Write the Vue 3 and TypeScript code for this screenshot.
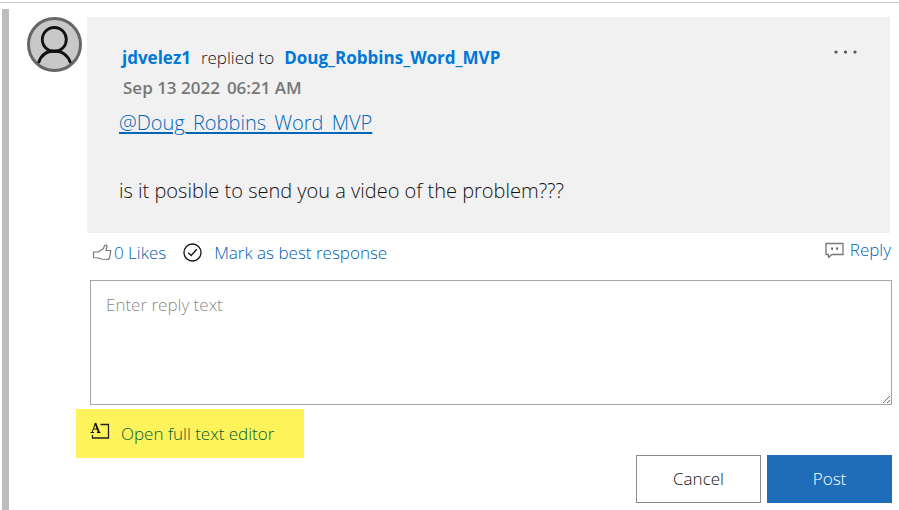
<script setup lang="ts">
import { ref } from 'vue'

interface Reply {
  author: string
  recipient: string
  date: string
  time: string
  body: string
}

const reply: Reply = {
  author: 'jdvelez1',
  recipient: 'Doug_Robbins_Word_MVP',
  date: 'Sep 13 2022',
  time: '06:21 AM',
  body: 'is it posible to send you a video of the problem???',
}

const likes = ref(0)
const draft = ref('')
</script>

<template>
  <main class="page">
    <article class="thread">
      <a class="avatar" href="#" aria-label="Author profile">
        <svg viewBox="0 0 55 55" aria-hidden="true">
          <circle cx="27.5" cy="27.5" r="26" fill="#c8c8c8" stroke="#666" stroke-width="3" />
          <circle cx="27.3" cy="22.5" r="12" fill="none" stroke="#111" stroke-width="2.800" />
          <path d="M11.500 46C14 38 20 34 27.300 34S41 38 43.500 46" fill="none" stroke="#111" stroke-width="2.800" />
        </svg>
      </a>

      <div class="content">
        <section class="card">
          <header class="card-head">
            <p class="byline">
              <a class="user" href="#">{{ reply.author }}</a>
              <span>replied to</span>
              <a class="user" href="#">{{ reply.recipient }}</a>
            </p>
            <button class="more" type="button" aria-label="More options">
              <svg viewBox="0 0 24 4" aria-hidden="true">
                <circle cx="2" cy="2" r="1.600" /><circle cx="11.500" cy="2" r="1.600" /><circle cx="21" cy="2" r="1.600" />
              </svg>
            </button>
          </header>
          <p class="stamp"><time>{{ reply.date }}</time><time>{{ reply.time }}</time></p>
          <p class="body"><a class="mention" href="#">@{{ reply.recipient }}</a></p>
          <p class="body message">{{ reply.body }}</p>
        </section>

        <div class="actions">
          <button class="action like" type="button" @click="likes++">
            <svg class="thumb" viewBox="0 0 20 18" aria-hidden="true">
              <path d="M1.500 8H6L11.500 4.500L12.500 1.500L14.500 1L15 2.500L14 6.500H18.800L17.500 14L16 15.500L9 15L6.500 14L1.500 13.500Z" fill="#fff" stroke="#777" stroke-width="1.200" stroke-linejoin="round" />
            </svg>
            <span>{{ likes }} Likes</span>
          </button>
          <button class="action best" type="button">
            <svg class="check" viewBox="0 0 19 19" aria-hidden="true">
              <circle cx="9.500" cy="9.500" r="8.500" fill="none" stroke="#111" stroke-width="1.300" />
              <path d="M5.200 9.800L8.200 12.500L13.800 6.200" fill="none" stroke="#111" stroke-width="1.300" />
            </svg>
            <span>Mark as best response</span>
          </button>
          <button class="action respond" type="button">
            <svg class="bubble" viewBox="0 0 19 17" aria-hidden="true">
              <path d="M1 2.500H18V13.500H7L3.500 16.500V13.500H1Z" fill="#fff" stroke="#777" stroke-width="1.300" />
              <path d="M6 6.500H8V8.500L7 9.500V8.500H6ZM11 6.500H13V8.500L12 9.500V8.500H11Z" fill="#666" />
            </svg>
            <span>Reply</span>
          </button>
        </div>

        <form class="editor" @submit.prevent>
          <textarea v-model="draft" aria-label="Reply text" placeholder="Enter reply text"></textarea>
          <button class="full-editor" type="button">
            <svg viewBox="0 0 20 18" aria-hidden="true">
              <path d="M0.500 10.500H4M7 10.500H10.500" fill="none" stroke="#111" stroke-width="1.200" />
              <path d="M2 10.500L5.500 1M3.500 7H8" fill="none" stroke="#111" stroke-width="1" />
              <path d="M5.300 1L9 10.500" fill="none" stroke="#111" stroke-width="1.900" />
              <path d="M10.500 2.500H18.500V16H2.500V13" fill="none" stroke="#222" stroke-width="1.300" />
            </svg>
            <span>Open full text editor</span>
          </button>
          <div class="buttons">
            <button class="btn cancel" type="button" @click="draft = ''">Cancel</button>
            <button class="btn post" type="submit">Post</button>
          </div>
        </form>
      </div>
    </article>
  </main>
</template>

<style>
body {
  background: #fff;
}
</style>

<style scoped>
.page {
  box-sizing: border-box;
  display: flex;
  flex-direction: column;
  min-height: 100vh;
  padding-top: 2px;
  font-family: "Open Sans", "Noto Sans", sans-serif;
  font-size: 17px;
  font-weight: 300;
  line-height: 24px;
  color: #111;
}

.page::before {
  content: "";
  height: 1px;
  margin-bottom: 6px;
  background: #c6c6c6;
}

.thread {
  flex: 1;
  display: flex;
  gap: 5px;
  margin-left: 2px;
  padding: 8px 7px 0 18px;
  border-left: 7px solid #bdbdbd;
}

.avatar {
  flex: none;
  width: 55px;
  height: 55px;
}

svg {
  display: block;
}

.content {
  flex: 1;
  min-width: 0;
}

p {
  margin: 0;
}

button {
  padding: 0;
  border: 0;
  background: none;
  font: inherit;
  cursor: pointer;
}

.card {
  box-sizing: border-box;
  min-height: 216px;
  margin-right: 2px;
  padding: 28px 32px 24px;
  background: #f1f1f1;
}

.card-head {
  display: flex;
  justify-content: space-between;
  padding-left: 3px;
}

.byline {
  display: flex;
  gap: 10px;
  padding-top: 1px;
}

.user {
  color: #0078d7;
  font-weight: 700;
  text-decoration: none;
}

.more {
  width: 24px;
  height: 14px;
}

.more svg {
  width: 24px;
  height: 4px;
  fill: #555;
}

.stamp {
  display: flex;
  gap: 7px;
  margin-top: 6px;
  padding-left: 4px;
  font-weight: 600;
  color: #767676;
}

.body {
  margin-top: 9px;
  font-size: 20px;
  line-height: 28px;
}

.message {
  margin-top: 40px;
}

.mention {
  color: #0067b8;
  text-underline-offset: 2px;
}

.actions {
  display: flex;
  align-items: center;
  height: 47px;
  padding: 0 1px 0 5px;
}

.action {
  display: flex;
  align-items: center;
  margin-bottom: 8px;
  color: #005fb0;
}

.like {
  gap: 2px;
}

.thumb {
  width: 20px;
  height: 18px;
}

.best {
  gap: 12px;
  margin-left: 17px;
}

.check {
  width: 19px;
  height: 19px;
}

.respond {
  gap: 6px;
  margin-left: auto;
  margin-bottom: 14px;
}

.bubble {
  width: 19px;
  height: 17px;
}

.editor {
  display: flow-root;
}

textarea {
  display: block;
  box-sizing: border-box;
  width: calc(100% - 3px);
  height: 125px;
  margin-left: 3px;
  padding: 12px 15px;
  border: 1px solid #a6a6a6;
  border-radius: 0;
  background: #fff;
  color: #333;
  font: inherit;
  resize: both;
}

textarea::placeholder {
  color: #8a8a8a;
}

.full-editor {
  display: flex;
  align-items: center;
  gap: 11px;
  width: 228px;
  height: 49px;
  margin: 4px 0 0 -11px;
  padding-left: 14px;
  background: #fff35c;
  color: #005f35;
}

.full-editor svg {
  width: 20px;
  height: 18px;
  margin-bottom: 6px;
}

.buttons {
  display: flex;
  justify-content: flex-end;
  gap: 6px;
  margin-top: -3px;
}

.btn {
  width: 125px;
  height: 48px;
}

.cancel {
  border: 1px solid #8c8c8c;
  background: #fff;
  color: #111;
}

.post {
  background: #1f6db8;
  color: #fff;
}
</style>
